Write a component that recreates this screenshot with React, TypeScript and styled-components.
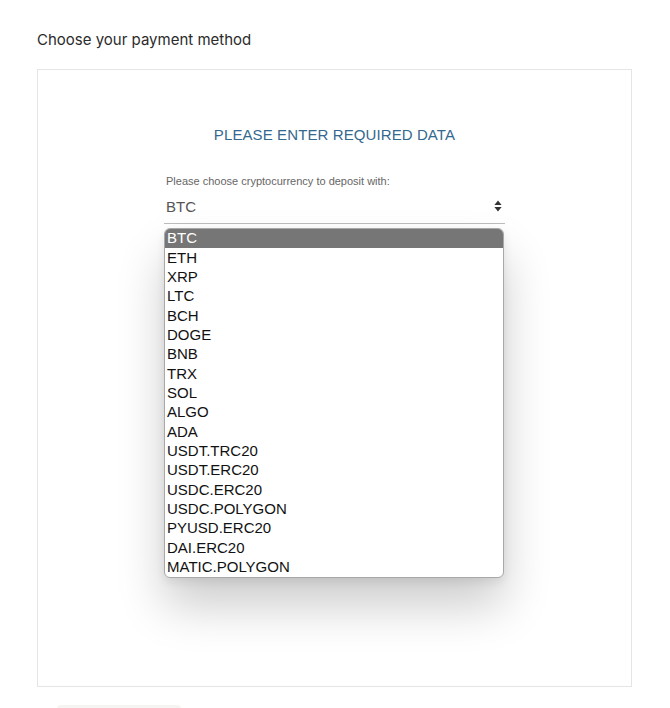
import React, { useState } from "react";
import styled, { createGlobalStyle } from "styled-components";

const GlobalStyle = createGlobalStyle`
  html, body {
    margin: 0;
    padding: 0;
    background: #ffffff;
  }
  body {
    font-family: Inter, "Liberation Sans", Arial, sans-serif;
  }
`;

const Page = styled.div`
  padding: 30px 38px 0 37px;
  width: 595px;
`;

const Heading = styled.h2`
  margin: 0 0 19px;
  font-family: Inter, "Liberation Sans", sans-serif;
  font-size: 15px;
  font-weight: 400;
  line-height: 20px;
  color: #2b2b2b;
`;

const Card = styled.section`
  box-sizing: border-box;
  width: 595px;
  height: 618px;
  border: 1px solid #e5e5e5;
  display: flex;
  flex-direction: column;
  align-items: center;
  padding-top: 56px;
`;

const Title = styled.h3`
  margin: 0;
  font-family: "Liberation Sans", Arial, sans-serif;
  font-size: 15px;
  font-weight: 400;
  line-height: 18px;
  color: #33688f;
  letter-spacing: 0.1px;
`;

const Form = styled.div`
  position: relative;
  width: 341px;
  margin-top: 31px;
`;

const Label = styled.label`
  display: block;
  padding-left: 2px;
  font-family: "Liberation Sans", Arial, sans-serif;
  font-size: 11px;
  line-height: 13px;
  color: #666666;
`;

const SelectBox = styled.div`
  box-sizing: border-box;
  height: 30px;
  margin-top: 6px;
  display: flex;
  align-items: center;
  justify-content: space-between;
  padding: 0 3px 5px 2px;
  border-bottom: 1px solid #bdbdbd;
  font-family: "Liberation Sans", Arial, sans-serif;
  font-size: 15px;
  color: #555555;
`;

const Menu = styled.ul`
  position: absolute;
  top: 53px;
  left: 0;
  width: 340px;
  box-sizing: border-box;
  margin: 0;
  padding: 0;
  list-style: none;
  background: #ffffff;
  border: 1px solid #a8a8a8;
  border-radius: 6px;
  overflow: hidden;
  box-shadow: 0 28px 48px rgba(0, 0, 0, 0.2), 0 4px 10px rgba(0, 0, 0, 0.08);
`;

const Option = styled.li<{ $active: boolean }>`
  box-sizing: border-box;
  height: 19.35px;
  padding: 0 0 2px 2px;
  display: flex;
  align-items: center;
  font-family: "Liberation Sans", Arial, sans-serif;
  font-size: 15px;
  color: ${(p) => (p.$active ? "#ffffff" : "#111111")};
  background: ${(p) => (p.$active ? "#767676" : "transparent")};
  cursor: default;
`;

const Footer = styled.div`
  margin: 18px 0 0 20px;
  width: 124px;
  height: 20px;
  border-radius: 4px 4px 0 0;
  background: #f6f4f2;
`;

const SortIcon = () => (
  <svg width="8" height="12" viewBox="0 0 8 12" aria-hidden="true">
    <path d="M4 0.5 L7.6 5 H0.4 Z" fill="#333" />
    <path d="M4 11.5 L7.6 7 H0.4 Z" fill="#333" />
  </svg>
);

const coins = [
  "BTC",
  "ETH",
  "XRP",
  "LTC",
  "BCH",
  "DOGE",
  "BNB",
  "TRX",
  "SOL",
  "ALGO",
  "ADA",
  "USDT.TRC20",
  "USDT.ERC20",
  "USDC.ERC20",
  "USDC.POLYGON",
  "PYUSD.ERC20",
  "DAI.ERC20",
  "MATIC.POLYGON",
];

export default function App() {
  const [value, setValue] = useState("BTC");
  return (
    <>
      <GlobalStyle />
      <Page>
        <Heading>Choose your payment method</Heading>
        <Card>
          <Title>PLEASE ENTER REQUIRED DATA</Title>
          <Form>
            <Label>Please choose cryptocurrency to deposit with:</Label>
            <SelectBox>
              <span>{value}</span>
              <SortIcon />
            </SelectBox>
            <Menu role="listbox">
              {coins.map((c) => (
                <Option
                  key={c}
                  role="option"
                  aria-selected={c === value}
                  $active={c === value}
                  onClick={() => setValue(c)}
                >
                  {c}
                </Option>
              ))}
            </Menu>
          </Form>
        </Card>
        <Footer />
      </Page>
    </>
  );
}
